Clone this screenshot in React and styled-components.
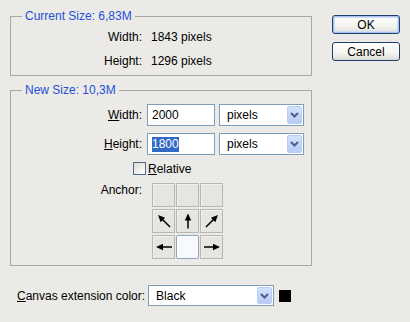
import React from 'react';
import styled, { createGlobalStyle } from 'styled-components';

const Global = createGlobalStyle`
  html, body { margin: 0; padding: 0; background: #ebeae7; }
  body { font-family: "Liberation Sans", Arial, sans-serif; font-size: 12px; color: #000; }
`;

const Dialog = styled.div`
  width: 410px;
  height: 322px;
  box-sizing: border-box;
  padding-top: 9px;
  background: #ebeae7;
  display: flex;
  flex-direction: column;
  line-height: 14px;
`;

const TopRow = styled.div`
  display: flex;
  align-items: flex-start;
`;

const Groups = styled.div`
  margin-left: 10px;
  width: 302px;
  display: flex;
  flex-direction: column;
  gap: 7px;
`;

const Group = styled.fieldset`
  margin: 0;
  padding: 0;
  border: 1px solid #a9a8a3;
  min-width: 0;
  box-sizing: border-box;
  width: 302px;
`;

const Legend = styled.legend`
  margin-left: 11px;
  padding: 0 3px;
  color: #2450d6;
  line-height: 14px;
`;

const InfoBody = styled.div`
  padding: 2px 0;
`;

const InfoRow = styled.div`
  height: 24px;
  display: flex;
  align-items: center;
`;

const Label = styled.span`
  width: 131px;
  flex: none;
  text-align: right;
  white-space: nowrap;
`;

const InfoValue = styled.span`
  margin-left: 9px;
`;

const Body = styled.div`
  padding: 7px 0 6px;
  display: flex;
  flex-direction: column;
`;

const FieldRow = styled.div`
  height: 22px;
  display: flex;
  align-items: center;
  margin-top: ${p => p.$mt || 0}px;
`;

const TextInput = styled.div`
  margin-left: 5px;
  width: 68px;
  height: 22px;
  box-sizing: border-box;
  border: 1px solid #7f9db9;
  background: #fff;
  display: flex;
  align-items: center;
  padding-left: 4px;
`;

const Selected = styled.span`
  background: #316ac5;
  color: #fff;
  line-height: 15px;
`;

const Select = styled.div`
  margin-left: ${p => p.$ml ?? 4}px;
  width: ${p => p.$w}px;
  height: ${p => p.$h || 22}px;
  box-sizing: border-box;
  border: 1px solid #7f9db9;
  background: #fff;
  display: flex;
  align-items: center;
  padding: 1px;
`;

const SelectText = styled.span`
  flex: 1;
  padding-left: 6px;
`;

const DropBtn = styled.span`
  width: 15px;
  height: 100%;
  box-sizing: border-box;
  border: 1px solid #b9cdf6;
  border-radius: 2px;
  background: linear-gradient(#d4e1fd, #b8cbf6);
  display: flex;
  align-items: center;
  justify-content: center;
`;

const Chevron = () => (
  <svg width="9" height="6" viewBox="0 0 9 6">
    <path d="M1 1 L4.5 4.5 L8 1" fill="none" stroke="#4d6185" strokeWidth="2" />
  </svg>
);

const U = styled.span`
  text-decoration: underline;
  text-underline-offset: 1px;
`;

const CheckRow = styled.label`
  margin-top: 7px;
  height: 13px;
  padding-left: 122px;
  display: flex;
  align-items: center;
`;

const Box = styled.span`
  width: 13px;
  height: 13px;
  box-sizing: border-box;
  border: 1px solid #4a6a8c;
  background: linear-gradient(135deg, #dcdcd6, #fff);
  flex: none;
`;

const CheckText = styled.span`
  margin-left: 2px;
`;

const AnchorRow = styled.div`
  margin-top: 8px;
  display: flex;
  align-items: flex-start;
`;

const AnchorLabel = styled(Label)`
  margin-top: 0;
`;

const AnchorGrid = styled.div`
  margin-left: 10px;
  display: grid;
  grid-template-columns: repeat(3, 23px);
  grid-template-rows: repeat(3, 24px);
  column-gap: 1px;
  row-gap: 2px;
`;

const Cell = styled.div`
  box-sizing: border-box;
  border: 1px solid ${p => (p.$active ? '#8fa6bf' : '#b7b6b1')};
  border-radius: ${p => (p.$active ? '2px' : '0')};
  background: ${p => (p.$active ? '#f7f9fc' : '#e6e5e2')};
  box-shadow: inset 1px 1px 0 ${p => (p.$active ? '#fff' : '#f2f1ef')};
  display: flex;
  align-items: center;
  justify-content: center;
`;

const ArrowSvg = styled.svg`
  transform: rotate(${p => p.$deg}deg);
`;

const Arrow = ({ deg, len = 15 }) => {
  const tip = 9 - len / 2;
  return (
    <ArrowSvg $deg={deg} width="18" height="18" viewBox="0 0 18 18">
      <line x1="9" y1={9 + len / 2} x2="9" y2={tip + 5} stroke="#000" strokeWidth="1.5" />
      <polygon points={`9,${tip} 5.8,${tip + 7} 12.2,${tip + 7}`} fill="#000" />
    </ArrowSvg>
  );
};

const Buttons = styled.div`
  margin-left: 20px;
  margin-top: 6px;
  display: flex;
  flex-direction: column;
  gap: 8px;
`;

const Button = styled.div`
  width: 68px;
  height: 19px;
  box-sizing: border-box;
  border: 1px solid #1e3f6e;
  border-radius: 3px;
  background: linear-gradient(#ffffff, #f3f3ef 60%, #dedcd4);
  box-shadow: ${p => (p.$default ? 'inset 0 0 0 1px #a9c2ef, inset 0 0 0 2px #cfdcf5' : 'none')};
  display: flex;
  align-items: center;
  justify-content: center;
`;

const ColorRow = styled.div`
  margin-top: 19px;
  padding-left: 17px;
  height: 21px;
  display: flex;
  align-items: center;
`;

const Swatch = styled.span`
  margin-left: 5px;
  width: 12px;
  height: 12px;
  background: #000;
`;

export default function App() {
  return (
    <>
      <Global />
      <Dialog>
        <TopRow>
          <Groups>
            <Group>
              <Legend>Current Size: 6,83M</Legend>
              <InfoBody>
                <InfoRow>
                  <Label>Width:</Label>
                  <InfoValue>1843 pixels</InfoValue>
                </InfoRow>
                <InfoRow>
                  <Label>Height:</Label>
                  <InfoValue>1296 pixels</InfoValue>
                </InfoRow>
              </InfoBody>
            </Group>
            <Group>
              <Legend>New Size: 10,3M</Legend>
              <Body>
                <FieldRow>
                  <Label><U>W</U>idth:</Label>
                  <TextInput>2000</TextInput>
                  <Select $w={85}>
                    <SelectText>pixels</SelectText>
                    <DropBtn><Chevron /></DropBtn>
                  </Select>
                </FieldRow>
                <FieldRow $mt={7}>
                  <Label><U>H</U>eight:</Label>
                  <TextInput><Selected>1800</Selected></TextInput>
                  <Select $w={85}>
                    <SelectText>pixels</SelectText>
                    <DropBtn><Chevron /></DropBtn>
                  </Select>
                </FieldRow>
                <CheckRow>
                  <Box />
                  <CheckText><U>R</U>elative</CheckText>
                </CheckRow>
                <AnchorRow>
                  <AnchorLabel>Anchor:</AnchorLabel>
                  <AnchorGrid>
                    <Cell />
                    <Cell />
                    <Cell />
                    <Cell><Arrow deg={-45} len={17} /></Cell>
                    <Cell><Arrow deg={0} len={15} /></Cell>
                    <Cell><Arrow deg={45} len={17} /></Cell>
                    <Cell><Arrow deg={-90} len={16} /></Cell>
                    <Cell $active />
                    <Cell><Arrow deg={90} len={16} /></Cell>
                  </AnchorGrid>
                </AnchorRow>
              </Body>
            </Group>
          </Groups>
          <Buttons>
            <Button $default>OK</Button>
            <Button>Cancel</Button>
          </Buttons>
        </TopRow>
        <ColorRow>
          <span><U>C</U>anvas extension color:</span>
          <Select $w={126} $h={21} $ml={3}>
            <SelectText>Black</SelectText>
            <DropBtn><Chevron /></DropBtn>
          </Select>
          <Swatch />
        </ColorRow>
      </Dialog>
    </>
  );
}
